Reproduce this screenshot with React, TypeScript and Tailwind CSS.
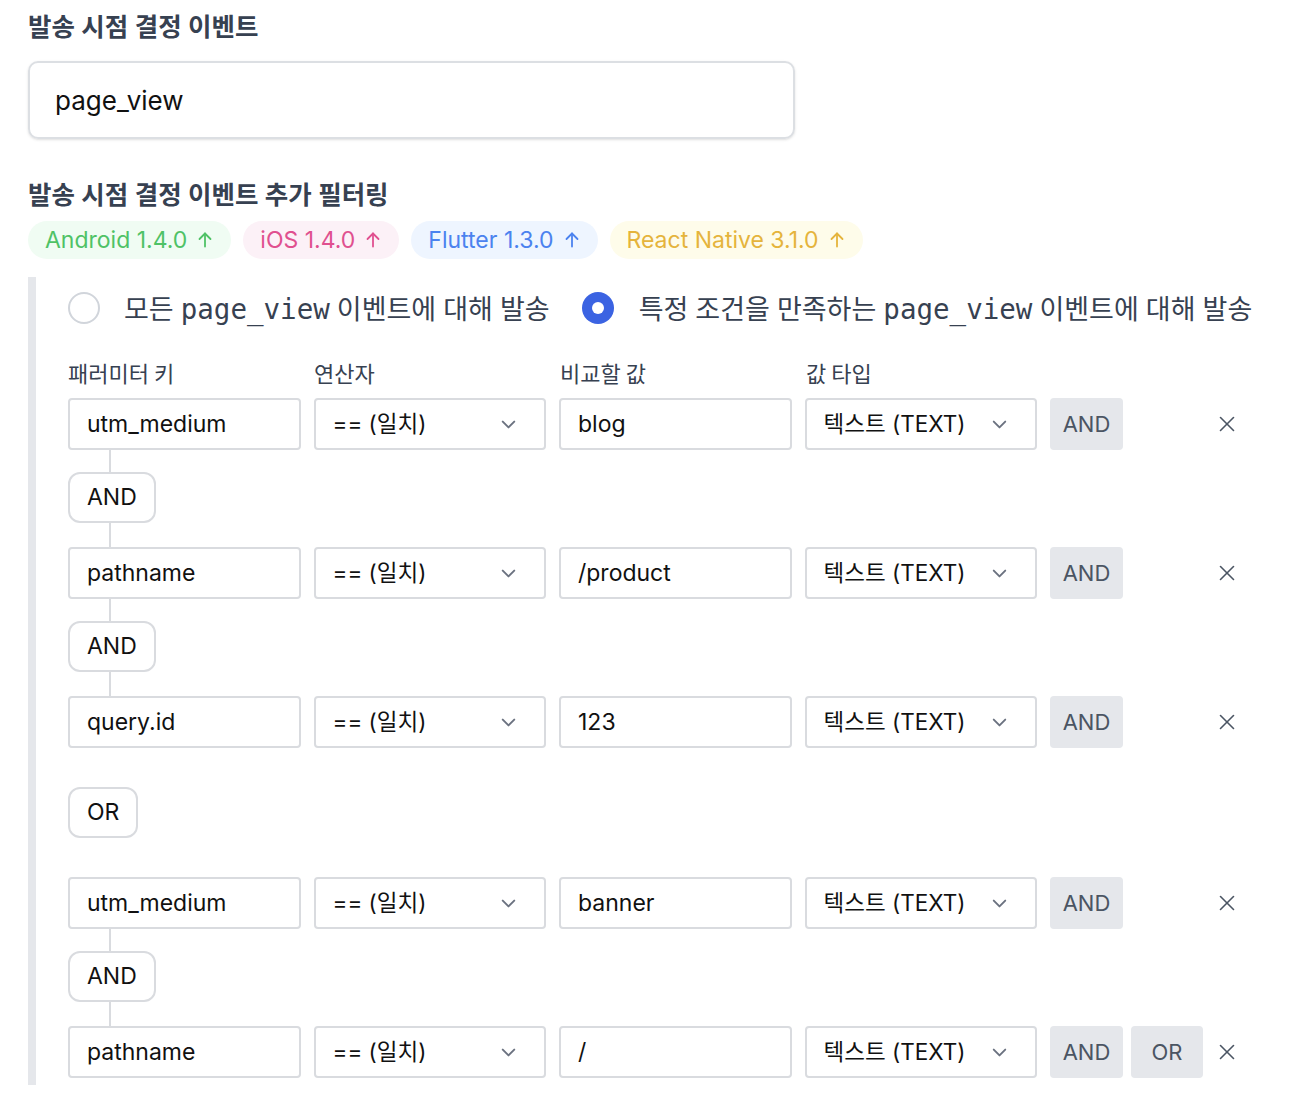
import React from "react";
import { ChevronDown, X } from "lucide-react";

const sans = "font-['Inter','Noto_Sans_CJK_KR',sans-serif]";
const korean = "font-['Noto_Sans_CJK_KR',sans-serif]";
const mono = "font-['DejaVu_Sans_Mono',monospace]";

interface Condition {
  key: string;
  value: string;
}

interface Badge {
  label: string;
  className: string;
}

const badges: Badge[] = [
  { label: "Android 1.4.0", className: "bg-[#f0fcf3] text-[#4fc266]" },
  { label: "iOS 1.4.0", className: "bg-[#fcf1f7] text-[#e0508f]" },
  { label: "Flutter 1.3.0", className: "bg-[#eef5ff] text-[#4b82ef]" },
  { label: "React Native 3.1.0", className: "bg-[#fefcea] text-[#e5b43c]" },
];

const groups: Condition[][] = [
  [
    { key: "utm_medium", value: "blog" },
    { key: "pathname", value: "/product" },
    { key: "query.id", value: "123" },
  ],
  [
    { key: "utm_medium", value: "banner" },
    { key: "pathname", value: "/" },
  ],
];

const ArrowUp = () => (
  <svg width="18" height="18" viewBox="0 0 18 18" fill="none" stroke="currentColor" strokeWidth="1.8" strokeLinecap="round" strokeLinejoin="round">
    <path d="M9 15.5V2.5" />
    <path d="M3.5 8L9 2.5L14.5 8" />
  </svg>
);

const Field = ({ children }: { children: React.ReactNode }) => (
  <div className="w-[232.5px] h-[52px] border-2 border-[#d9dbdf] rounded bg-white flex items-center px-[17px] text-[23px] text-[#111111]">
    {children}
  </div>
);

const Select = ({ label }: { label: string }) => (
  <div className="w-[232.5px] h-[52px] border-2 border-[#d9dbdf] rounded bg-white flex items-center justify-between pl-[17px] pr-[24px] text-[22.5px] text-[#111111]">
    <span>{label}</span>
    <ChevronDown className="w-[23px] h-[23px] text-[#6b7280]" strokeWidth={2} />
  </div>
);

const ConditionRow = ({ cond, last }: { cond: Condition; last: boolean }) => (
  <div className="flex items-center gap-[13px]">
    <Field>{cond.key}</Field>
    <Select label="== (일치)" />
    <Field>{cond.value}</Field>
    <Select label="텍스트 (TEXT)" />
    <div className="w-[190px] flex items-center gap-2">
      <button className="w-[73px] h-[52px] rounded bg-[#e5e7eb] text-[#4b5563] text-[22px]">AND</button>
      {last && (
        <button className="w-[72px] h-[52px] rounded bg-[#e5e7eb] text-[#4b5563] text-[22px]">OR</button>
      )}
      <X className="ml-auto w-[26px] h-[26px] text-[#4b5563]" strokeWidth={1.5} />
    </div>
  </div>
);

const Pill = ({ label }: { label: string }) => (
  <div className="inline-flex h-[51px] items-center px-[17px] border-2 border-[#d9dbdf] rounded-xl bg-white text-[23px] text-[#111111]">
    {label}
  </div>
);

const Line = ({ h }: { h: string }) => <div className={`ml-[41px] w-[2px] bg-[#d9dbdf] ${h}`} />;

const Code = ({ children }: { children: React.ReactNode }) => (
  <span className={`${mono} text-[27.5px]`}>{children}</span>
);

export default function App() {
  return (
    <div className={`${sans} bg-white min-h-screen px-[28px] pt-[11px] pb-[33px]`}>
      <h2 className="text-[25.5px] leading-8 font-semibold text-[#374151]">발송 시점 결정 이벤트</h2>
      <div className="mt-[18px] w-[767px] h-[78px] border-2 border-[#dcdfe3] rounded-[10px] shadow-sm flex items-center px-[25px] text-[26px] text-[#111111]">
        page_view
      </div>

      <h2 className="mt-[40px] text-[25.5px] leading-8 font-semibold text-[#374151]">
        발송 시점 결정 이벤트 추가 필터링
      </h2>
      <div className="mt-[10px] flex gap-3">
        {badges.map((b) => (
          <div key={b.label} className={`h-[38px] rounded-full px-[17px] flex items-center gap-[9px] text-[23px] ${b.className}`}>
            <span>{b.label}</span>
            <ArrowUp />
          </div>
        ))}
      </div>

      <div className="mt-[18px] border-l-[8px] border-[#e5e7eb] pl-[32px] pt-[15px] pb-[7px]">
        <div className={`h-[32px] flex items-center ${korean} text-[27px] leading-8 text-[#374151] [word-spacing:1px]`}>
          <span className="w-[32px] h-[32px] rounded-full border-2 border-[#d1d5db] bg-white" />
          <span className="ml-[24px] whitespace-nowrap">
            모든 <Code>page_view</Code> 이벤트에 대해 발송
          </span>
          <span className="ml-[32px] w-[32px] h-[32px] rounded-full bg-[#3b63e2] flex items-center justify-center">
            <span className="w-[12px] h-[12px] rounded-full bg-white" />
          </span>
          <span className="ml-[25px] whitespace-nowrap">
            특정 조건을 만족하는 <Code>page_view</Code> 이벤트에 대해 발송
          </span>
        </div>

        <div className={`mt-[34px] flex text-[22px] leading-7 text-[#374151] ${korean}`}>
          <span className="w-[246px]">패러미터 키</span>
          <span className="w-[246px]">연산자</span>
          <span className="w-[246px]">비교할 값</span>
          <span>값 타입</span>
        </div>

        <div className="mt-[12px] flex flex-col">
          {groups.map((group, gi) => (
            <div key={gi} className="flex flex-col">
              {gi > 0 && (
                <div className="my-[39px]">
                  <Pill label="OR" />
                </div>
              )}
              {group.map((cond, ci) => (
                <div key={ci} className="flex flex-col">
                  {ci > 0 && (
                    <>
                      <Line h="h-[22px]" />
                      <div>
                        <Pill label="AND" />
                      </div>
                      <Line h="h-[24px]" />
                    </>
                  )}
                  <ConditionRow cond={cond} last={gi === groups.length - 1 && ci === group.length - 1} />
                </div>
              ))}
            </div>
          ))}
        </div>
      </div>
    </div>
  );
}
